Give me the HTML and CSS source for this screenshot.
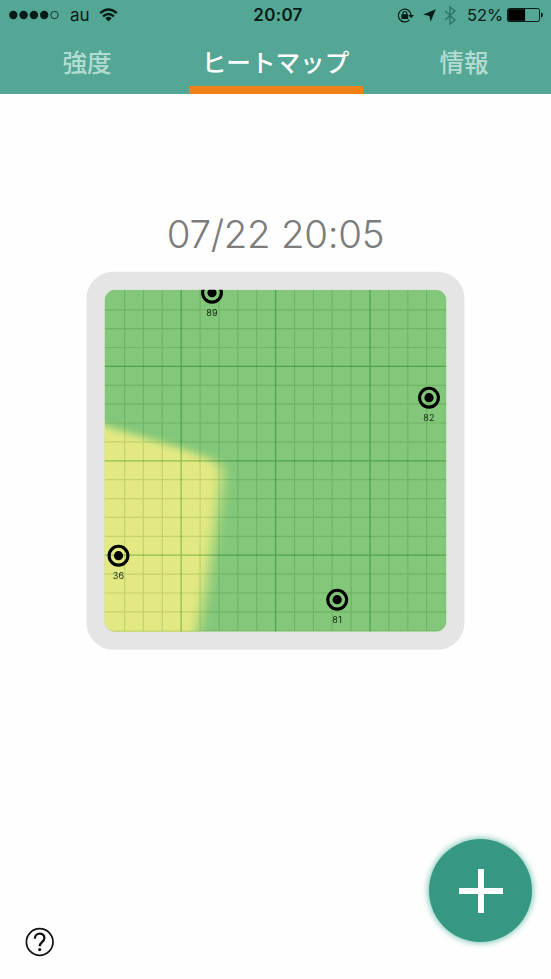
FILE: index.html
```html
<!DOCTYPE html>
<html lang="ja">
<head>
<meta charset="utf-8">
<title>ヒートマップ</title>
<link rel="stylesheet" href="styles.css">
</head>
<body>
<div class="app">
  <header class="header">
    <div class="status">
      <div class="status-left">
        <svg class="signal" viewBox="0 0 50 10"><g><circle cx="4.3" cy="5" r="4.2"/><circle cx="14.6" cy="5" r="4.2"/><circle cx="24.9" cy="5" r="4.2"/><circle cx="35.2" cy="5" r="4.2"/><circle cx="45.5" cy="5" r="3.7" fill="none" stroke="#071b17" stroke-width=".8"/></g></svg>
        <span class="carrier">au</span>
        <svg class="wifi" viewBox="0 0 19 14"><g fill="none" stroke="#071b17" stroke-width="2.4"><path d="M1.2 5.2Q9.5-2.3 17.8 5.2"/><path d="M4.1 8.4Q9.5 3.6 14.9 8.4"/></g><path d="M6.3 10.3Q9.5 7.4 12.7 10.3L9.5 13.5Z"/></svg>
      </div>
      <span class="clock">20:07</span>
      <div class="status-right">
        <svg class="lock" viewBox="0 0 18 15"><g fill="none" stroke="#071b17" stroke-width="1.2"><path d="M12.5 11.8A6.4 6.4 0 1 1 14.1 7.2"/><path d="M5.9 7V5.4a1.9 1.9 0 0 1 3.8 0V7"/></g><rect x="4.4" y="6.3" width="6.8" height="4.7" rx=".4"/><path d="M11.4 7h5.6l-2.8 3.3z"/></svg>
        <svg class="arrow" viewBox="0 0 13 13"><path d="M12.8.2 7.6 12.8 6.4 6.9.2 5.5z"/></svg>
        <svg class="bluetooth" viewBox="0 0 12 19"><path d="M1 5 11 14 6 18V1l5 4L1 14" fill="none" stroke="#2d7769" stroke-width="1.4"/></svg>
        <span class="percent">52%</span>
        <svg class="battery" viewBox="0 0 36 14"><rect x=".5" y=".5" width="32" height="13" rx="1.8" fill="none" stroke="#071b17"/><rect x="1.2" y="1.2" width="16.9" height="11.6" fill="#000"/><path d="M34 4.3q2 .7 2 2.7t-2 2.7z"/></svg>
      </div>
    </div>
    <nav class="tabs">
      <a class="tab">強度</a>
      <a class="tab active">ヒートマップ</a>
      <a class="tab">情報</a>
    </nav>
  </header>
  <main class="content">
    <h1 class="stamp">07/22 20:05</h1>
    <div class="frame">
      <svg class="map" viewBox="0 0 342 342">
        <defs>
          <filter id="soft" x="-20%" y="-20%" width="140%" height="140%"><feGaussianBlur stdDeviation="7 3.8"/></filter>
          <g id="beacon"><circle r="9.4" fill="none" stroke="#000" stroke-width="3.1"/><circle r="4.6"/></g>
        </defs>
        <rect width="342" height="342" fill="#82c77a"/>
        <path d="M-40 124 0 136 78 159 108 170Q121 176 117 195L111 237 103 292 93 342 83 382H-40Z" fill="#e3e982" filter="url(#soft)"/>
        <path class="minor" d="M20.1 0V342M38.9 0V342M57.8 0V342M95.6 0V342M114.5 0V342M133.3 0V342M152.2 0V342M190 0V342M208.9 0V342M227.7 0V342M246.6 0V342M284.4 0V342M303.3 0V342M322.1 0V342M0 20.1H342M0 38.9H342M0 57.8H342M0 95.6H342M0 114.5H342M0 133.3H342M0 152.2H342M0 190H342M0 208.9H342M0 227.7H342M0 246.6H342M0 284.4H342M0 303.3H342M0 322.1H342M0 341.4H342"/>
        <path class="major" d="M76.7 0V342M171.1 0V342M265.5 0V342M0 76.7H342M0 171.1H342M0 265.5H342"/>
        <use href="#beacon" x="107.5" y="3"/>
        <use href="#beacon" x="324.5" y="108"/>
        <use href="#beacon" x="14" y="266"/>
        <use href="#beacon" x="232.7" y="310"/>
        <g class="levels">
          <text x="107.5" y="26.8">89</text>
          <text x="324.5" y="131.8">82</text>
          <text x="14" y="289.8">36</text>
          <text x="232.7" y="333.8">81</text>
        </g>
      </svg>
    </div>
  </main>
  <footer class="footer">
    <svg class="help" viewBox="0 0 30 30"><circle cx="14.7" cy="15" r="13.3" fill="none" stroke="#111" stroke-width="1.7"/><path d="M9.8 11.8C9.8 5 19.4 5 19.4 11 19.4 15.2 14.7 15 14.7 19.2" fill="none" stroke="#111" stroke-width="2.3"/><circle cx="14.7" cy="22.6" r="1.6" fill="#111"/></svg>
    <div class="add"><svg class="plus" viewBox="0 0 46 46"><path d="M23 1V45M1 23H45" stroke="#fff" stroke-width="6"/></svg></div>
  </footer>
</div>
</body>
</html>
```
FILE: styles.css
```css
* { box-sizing: border-box; }
body { margin: 0; background: #fefefe; font-family: Inter, "Noto Sans CJK JP", sans-serif; }
svg { display: block; flex: none; overflow: visible; }
.app { height: 979px; display: flex; flex-direction: column; overflow: hidden; }
.header { height: 94px; background: #54a695; display: flex; flex-direction: column; flex: none; }
.status { height: 30px; display: grid; grid-template-columns: 1fr auto 1fr; align-items: center; padding: 0 8px 0 9px; color: #071b17; fill: #071b17; line-height: 20px; }
.status-left, .status-right { display: flex; align-items: center; }
.status-right { justify-content: flex-end; }
.signal { width: 50px; height: 10px; }
.carrier { font-size: 17px; margin-left: 11px; }
.wifi { width: 19px; height: 14px; margin-left: 9px; }
.clock { font-size: 17px; font-weight: 600; letter-spacing: .3px; padding-left: 4px; }
.lock { width: 18px; height: 15px; }
.arrow { width: 13px; height: 13px; margin-left: 8px; }
.bluetooth { width: 12px; height: 19px; margin-left: 8px; }
.percent { font-size: 16.5px; margin-left: 11px; letter-spacing: -.1px; }
.battery { width: 36px; height: 14px; margin-left: 4px; }
.tabs { flex: 1; display: grid; grid-template-columns: repeat(3, 1fr); column-gap: 14.5px; }
.tab { text-align: center; font: 500 24.6px/62px "Noto Sans CJK JP", sans-serif; color: #b3dcd1; height: 64px; }
.active { color: #fff; border-bottom: 8px solid #f08018; }
.content { flex: 1; display: flex; flex-direction: column; align-items: center; padding-top: 115.5px; }
.stamp { margin: 0; font-size: 38.5px; font-weight: 350; letter-spacing: -.3px; line-height: 46px; height: 62px; color: #7c7c7c; white-space: nowrap; padding-top: 1px; }
.frame { width: 378px; height: 378px; padding: 18px; border-radius: 27px; background: #e6e5e6; transform: translate(-.5px, -.3px); }
.map { width: 342px; height: 342px; overflow: hidden; border-radius: 11px; isolation: isolate; }
.minor { stroke: #dce8d2; stroke-width: 1.2; mix-blend-mode: multiply; }
.major { stroke: #9fd2a0; stroke-width: 1.3; mix-blend-mode: multiply; }
.levels { font-size: 9px; letter-spacing: .3px; text-anchor: middle; fill: #122614; }
.footer { display: flex; align-items: flex-end; justify-content: space-between; padding: 0 19px 37px 25px; }
.help { width: 30px; height: 30px; margin-bottom: -15px; }
.add { width: 103px; height: 103px; border-radius: 50%; background: #369883; display: flex; align-items: center; justify-content: center; box-shadow: 0 0 6px 1px #7ac5b3; }
.plus { width: 46px; height: 46px; }
```
